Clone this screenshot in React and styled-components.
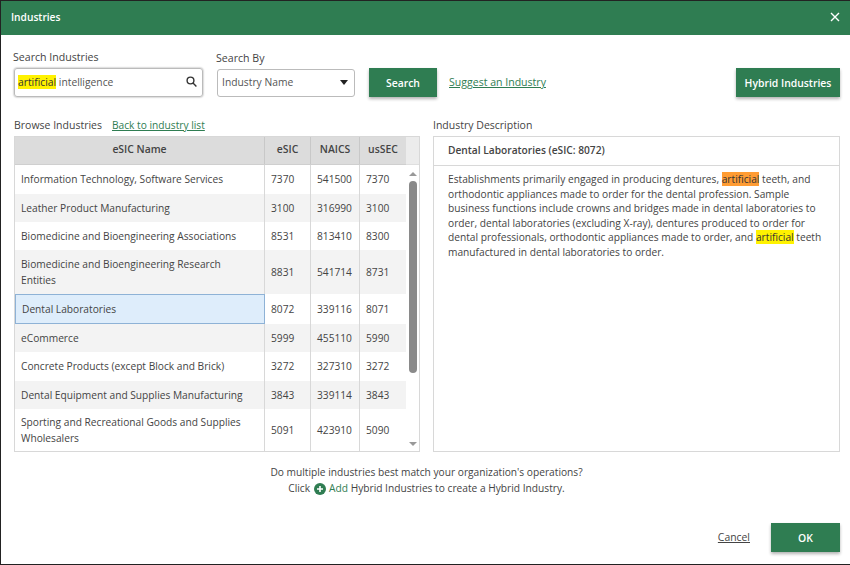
import React from "react";
import styled, { createGlobalStyle } from "styled-components";

const rows = [
  { name: "Information Technology, Software Services", esic: "7370", naics: "541500", ussec: "7370", h: 29 },
  { name: "Leather Product Manufacturing", esic: "3100", naics: "316990", ussec: "3100", h: 28 },
  { name: "Biomedicine and Bioengineering Associations", esic: "8531", naics: "813410", ussec: "8300", h: 28 },
  { name: "Biomedicine and Bioengineering Research Entities", esic: "8831", naics: "541714", ussec: "8731", h: 44 },
  { name: "Dental Laboratories", esic: "8072", naics: "339116", ussec: "8071", h: 30, selected: true },
  { name: "eCommerce", esic: "5999", naics: "455110", ussec: "5990", h: 28 },
  { name: "Concrete Products (except Block and Brick)", esic: "3272", naics: "327310", ussec: "3272", h: 29 },
  { name: "Dental Equipment and Supplies Manufacturing", esic: "3843", naics: "339114", ussec: "3843", h: 28 },
  { name: "Sporting and Recreational Goods and Supplies Wholesalers", esic: "5091", naics: "423910", ussec: "5090", h: 42 },
];

const GlobalStyle = createGlobalStyle`
  html, body {
    margin: 0;
    padding: 0;
    background: #fff;
  }
  * {
    box-sizing: border-box;
  }
`;

const Dialog = styled.div`
  width: 850px;
  height: 565px;
  border: 1px solid #222;
  border-width: 1px 0 1px 1px;
  background: #fff;
  font-family: "Open Sans", sans-serif;
  font-size: 10.2px;
  color: #444;
  display: flex;
  flex-direction: column;
`;
const Header = styled.div`
  height: 34px;
  flex: none;
  background: #2f7d52;
  color: #fff;
  font-weight: 600;
  font-size: 10.2px;
  display: flex;
  align-items: center;
  justify-content: space-between;
  padding: 0 10px 3px 10px;
`;
const Close = styled.svg`
  width: 10px;
  height: 10px;
  stroke: #fff;
  stroke-width: 1.4;
  fill: none;
`;
const Body = styled.div`
  flex: 1;
  padding: 14px 10px 0 13px;
  display: flex;
  flex-direction: column;
`;
const SearchBar = styled.div`
  height: 48px;
  display: flex;
  align-items: flex-end;
`;
const Field = styled.div`
  display: flex;
  flex-direction: column;
  width: ${(p) => p.$w}px;
  margin-right: ${(p) => p.$mr}px;
`;
const Label = styled.div`
  font-size: 10.6px;
  font-weight: 500;
  color: #444;
  line-height: 15px;
  margin-left: -1px;
  margin-bottom: 3px;
`;
const InputBox = styled.div`
  height: ${(p) => p.$h}px;
  border: 1px solid #bbb;
  border-radius: 3px;
  box-shadow: ${(p) => (p.$inset ? "0 0 2px #888" : "none")};
  display: flex;
  align-items: center;
  justify-content: space-between;
  padding: 0 5px 2px ${(p) => (p.$inset ? 3 : 4)}px;
  font-size: 10.3px;
  color: #555;
`;
const Mark = styled.span`
  background: ${(p) => (p.$orange ? "#ff9c33" : "#fff200")};
  color: #333;
`;
const Caret = styled.span`
  width: 0;
  height: 0;
  border-left: 4px solid transparent;
  border-right: 4px solid transparent;
  border-top: 5px solid #222;
  margin-right: 1px;
`;
const Button = styled.button`
  width: ${(p) => p.$w}px;
  height: 29px;
  border: 0;
  background: #2f7d52;
  color: #fff;
  font-family: inherit;
  font-size: 10.4px;
  font-weight: 600;
  padding: 1px 0 0;
  box-shadow: 0 2px 3px rgba(0, 0, 0, 0.3);
`;
const OkButton = styled(Button)`
  padding: 0;
`;
const TextLink = styled.a`
  color: #2f7d52;
  font-size: 10.2px;
  font-weight: 500;
  text-decoration: underline;
`;
const SuggestLink = styled(TextLink)`
  font-size: 10.55px;
  margin-left: 12px;
  line-height: 30px;
  margin-right: auto;
`;
const Panels = styled.div`
  margin-top: 20px;
  display: flex;
  gap: 13px;
`;
const Browse = styled.div`
  width: 406px;
`;
const Describe = styled.div`
  width: 407px;
`;
const PanelTitle = styled.div`
  height: 19px;
  padding-top: 1px;
  display: flex;
  gap: 10px;
  font-size: 10.5px;
  font-weight: 500;
  line-height: 15px;
`;
const TableBox = styled.div`
  height: 316px;
  border: 1px solid #d8d8d8;
  display: flex;
`;
const TableMain = styled.div`
  width: 391px;
  display: flex;
  flex-direction: column;
`;
const HeadRow = styled.div`
  height: 28px;
  flex: none;
  display: grid;
  grid-template-columns: 250px 46px 49px 46px;
  background: #dcdcdc;
  border-bottom: 1px solid #cfcfcf;
  font-size: 10.4px;
  font-weight: 600;
  color: #444;
`;
const HeadCell = styled.div`
  display: flex;
  align-items: center;
  justify-content: center;
  border-right: 1px solid #c8c8c8;
  padding-bottom: 3px;
  &:last-child {
    border-right: 0;
  }
`;
const Row = styled.div`
  height: ${(p) => p.$h}px;
  display: grid;
  grid-template-columns: 250px 46px 49px 46px;
  background: ${(p) => (p.$odd ? "#f3f3f3" : "#fff")};
`;
const Cell = styled.div`
  display: flex;
  align-items: center;
  padding-left: 6px;
  padding-bottom: 1px;
  line-height: 16px;
  border-right: 1px solid #d8d8d8;
  &:last-child {
    border-right: 0;
  }
`;
const NameCell = styled(Cell)`
  padding: 0 14px 1px 6px;
  ${(p) =>
    p.$selected &&
    `
    background: #deedfb;
    border: 1px solid #8eb2d6;
  `}
`;
const Scroller = styled.div`
  flex: 1;
  display: flex;
  flex-direction: column;
  align-items: center;
  background: #f4f4f4;
`;
const ScrollHead = styled.div`
  height: 28px;
  flex: none;
  align-self: stretch;
  background: #ececec;
  border-bottom: 1px solid #dfdfdf;
`;
const ScrollTrack = styled.div`
  flex: 1;
  align-self: stretch;
  background: #fff;
  display: flex;
  flex-direction: column;
  align-items: center;
  padding: 7px 0 5px;
`;
const ArrowUp = styled.span`
  border-left: 4px solid transparent;
  border-right: 4px solid transparent;
  border-bottom: 4px solid #999;
`;
const ArrowDown = styled.span`
  border-left: 4px solid transparent;
  border-right: 4px solid transparent;
  border-top: 4px solid #999;
  margin-top: auto;
`;
const Thumb = styled.div`
  width: 8px;
  height: 192px;
  margin-top: 5px;
  border-radius: 4px;
  background: #8a8a8a;
`;
const DescBox = styled.div`
  height: 316px;
  border: 1px solid #d8d8d8;
`;
const DescHead = styled.div`
  height: 29px;
  border-bottom: 1px solid #d8d8d8;
  padding: 0 14px 3px;
  display: flex;
  align-items: center;
  font-weight: 600;
`;
const DescText = styled.div`
  padding: 6px 14px;
  line-height: 14.5px;
`;
const Note = styled.div`
  margin-top: 12px;
  text-align: center;
  line-height: 16px;
  padding-right: 1px;
`;
const AddIcon = styled.svg`
  width: 12px;
  height: 12px;
  vertical-align: -2.5px;
  margin: 0 3px 0 4px;
`;
const AddText = styled.span`
  color: #2f7d52;
`;
const Footer = styled.div`
  margin-top: 27px;
  display: flex;
  align-items: center;
  justify-content: flex-end;
  gap: 21px;
`;
const CancelLink = styled.a`
  color: #444;
  font-size: 10.4px;
  font-weight: 500;
  text-decoration: underline;
  margin-bottom: 1px;
`;

function SearchIcon() {
  return (
    <svg width="11" height="11" viewBox="0 0 11 11" fill="none" stroke="#333" strokeWidth="1.4">
      <circle cx="4.5" cy="4.5" r="3.4" />
      <path d="M7 7l3.4 3.4" />
    </svg>
  );
}

export default function App() {
  return (
    <Dialog>
      <GlobalStyle />
      <Header>
        Industries
        <Close viewBox="0 0 10 10">
          <path d="M1 1l8 8M9 1l-8 8" />
        </Close>
      </Header>
      <Body>
        <SearchBar>
          <Field $w={189} $mr={14}>
            <Label>Search Industries</Label>
            <InputBox $h={29} $inset>
              <span>
                <Mark>artificial</Mark> intelligence
              </span>
              <SearchIcon />
            </InputBox>
          </Field>
          <Field $w={138} $mr={14}>
            <Label>Search By</Label>
            <InputBox $h={28}>
              Industry Name
              <Caret />
            </InputBox>
          </Field>
          <Button $w={68}>Search</Button>
          <SuggestLink>Suggest an Industry</SuggestLink>
          <Button $w={104}>Hybrid Industries</Button>
        </SearchBar>
        <Panels>
          <Browse>
            <PanelTitle>
              Browse Industries
              <TextLink>Back to industry list</TextLink>
            </PanelTitle>
            <TableBox>
              <TableMain>
                <HeadRow>
                  <HeadCell>eSIC Name</HeadCell>
                  <HeadCell>eSIC</HeadCell>
                  <HeadCell>NAICS</HeadCell>
                  <HeadCell>usSEC</HeadCell>
                </HeadRow>
                {rows.map((r, i) => (
                  <Row key={r.name} $h={r.h} $odd={i % 2 === 1}>
                    <NameCell $selected={r.selected}>{r.name}</NameCell>
                    <Cell>{r.esic}</Cell>
                    <Cell>{r.naics}</Cell>
                    <Cell>{r.ussec}</Cell>
                  </Row>
                ))}
              </TableMain>
              <Scroller>
                <ScrollHead />
                <ScrollTrack>
                  <ArrowUp />
                  <Thumb />
                  <ArrowDown />
                </ScrollTrack>
              </Scroller>
            </TableBox>
          </Browse>
          <Describe>
            <PanelTitle>Industry Description</PanelTitle>
            <DescBox>
              <DescHead>Dental Laboratories (eSIC: 8072)</DescHead>
              <DescText>
                Establishments primarily engaged in producing dentures, <Mark $orange>artificial</Mark> teeth, and
                orthodontic appliances made to order for the dental profession. Sample business functions include
                crowns and bridges made in dental laboratories to order, dental laboratories (excluding X-ray),
                dentures produced to order for dental professionals, orthodontic appliances made to order, and{" "}
                <Mark>artificial</Mark> teeth manufactured in dental laboratories to order.
              </DescText>
            </DescBox>
          </Describe>
        </Panels>
        <Note>
          Do multiple industries best match your organization's operations?
          <br />
          Click
          <AddIcon viewBox="0 0 12 12">
            <circle cx="6" cy="6" r="6" fill="#2f7d52" />
            <path d="M6 3v6M3 6h6" stroke="#fff" strokeWidth="1.6" />
          </AddIcon>
          <AddText>Add</AddText> Hybrid Industries to create a Hybrid Industry.
        </Note>
        <Footer>
          <CancelLink>Cancel</CancelLink>
          <OkButton $w={69}>OK</OkButton>
        </Footer>
      </Body>
    </Dialog>
  );
}
